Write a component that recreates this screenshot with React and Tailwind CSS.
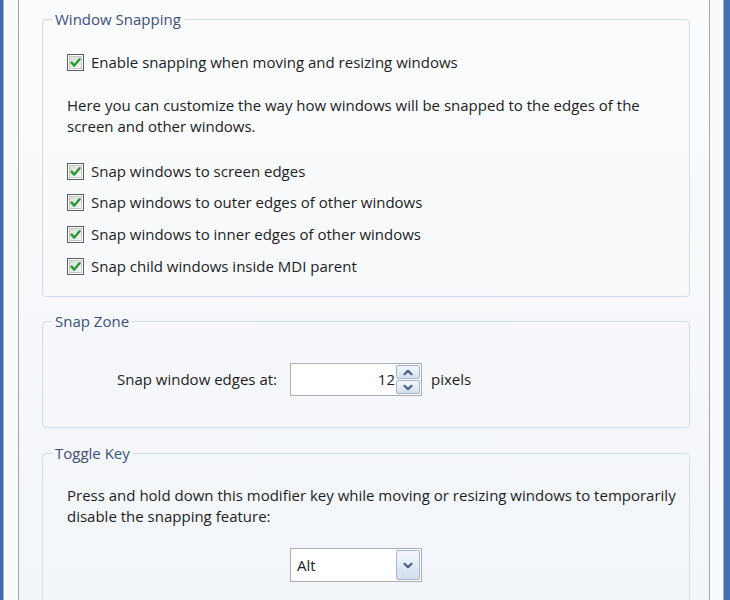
import React from "react";

const CheckBox = () => (
  <svg width="17" height="17" viewBox="0 0 17 17" className="shrink-0">
    <defs>
      <linearGradient id="cbfill" x1="0" y1="0" x2="1" y2="1">
        <stop offset="0" stopColor="#d6dbd7" />
        <stop offset="1" stopColor="#fbfcfb" />
      </linearGradient>
    </defs>
    <rect x="0.5" y="0.5" width="16" height="16" fill="#fff" stroke="#56625a" />
    <rect x="2.5" y="2.5" width="12" height="12" fill="url(#cbfill)" stroke="#c4cac5" />
    <path d="M4.6 8.6 L7.3 11.6 L12.6 5.2" fill="none" stroke="#2c9b2f" strokeWidth="2.4" strokeLinecap="round" strokeLinejoin="round" />
  </svg>
);

const Chevron = ({ down }) => (
  <svg width="10" height="7" viewBox="0 0 10 7">
    <path
      d={down ? "M1.5 1.8 L5 5.2 L8.5 1.8" : "M1.5 5.2 L5 1.8 L8.5 5.2"}
      fill="none"
      stroke="#4b5f82"
      strokeWidth="2.2"
      strokeLinecap="round"
      strokeLinejoin="round"
    />
  </svg>
);

const Group = ({ title, className, children }) => (
  <fieldset className={`rounded-[4px] border border-[#d3dbe2] p-0 ${className}`}>
    <legend className="ml-[9px] px-[3px] leading-[20px] text-[#3b507c]">{title}</legend>
    {children}
  </fieldset>
);

const Option = ({ label }) => (
  <div className="flex h-[20px] items-center gap-[7px]">
    <CheckBox />
    <span>{label}</span>
  </div>
);

export default function App() {
  return (
    <div className="flex h-[600px] w-[730px] overflow-hidden bg-white font-['Open_Sans',sans-serif] text-[15px] text-[#1d1d1d]">
      {/* window frame left */}
      <div className="w-[3px] bg-[#3f69a8]"></div>
      <div className="w-[15px] border-l border-[#9db7dc] bg-[#f8fafc]"></div>

      {/* tab page */}
      <div className="flex-1 border-x border-[#a3a7ad] bg-gradient-to-b from-[#fbfcfd] to-[#f2f5f9] pt-[9px] pl-[23px] pr-[19px]">
        <Group title="Window Snapping">
          <div className="px-[24px] pt-[23px] pb-[20px]">
            <Option label="Enable snapping when moving and resizing windows" />
            <p className="mt-[23px] leading-[21px]">
              Here you can customize the way how windows will be snapped to the edges of the
              <br />
              screen and other windows.
            </p>
            <div className="mt-[24px] flex flex-col gap-[11.7px]">
              <Option label="Snap windows to screen edges" />
              <Option label="Snap windows to outer edges of other windows" />
              <Option label="Snap windows to inner edges of other windows" />
              <Option label="Snap child windows inside MDI parent" />
            </div>
          </div>
        </Group>

        <Group title="Snap Zone" className="mt-[14px]">
          <div className="flex items-center pl-[74px] pt-[32px] pb-[31px]">
            <span className="w-[173px]">Snap window edges at:</span>
            <div className="flex h-[33px] w-[132px] items-center border border-[#abadb3] bg-white pr-[1px]">
              <span className="flex-1 pr-[1px] text-right">12</span>
              <div className="flex w-[24px] flex-col gap-[1px]">
                <div className="flex h-[14px] items-center justify-center rounded-[2px] border border-[#a7b6ca] bg-gradient-to-b from-[#f3f7fc] to-[#d5e0ee]">
                  <Chevron />
                </div>
                <div className="flex h-[14px] items-center justify-center rounded-[2px] border border-[#a7b6ca] bg-gradient-to-b from-[#f3f7fc] to-[#d5e0ee]">
                  <Chevron down />
                </div>
              </div>
            </div>
            <span className="ml-[9px]">pixels</span>
          </div>
        </Group>

        <Group title="Toggle Key" className="mt-[15px]">
          <div className="pl-[24px] pr-[8px] pt-[22px] pb-[30px]">
            <p className="whitespace-nowrap leading-[21px]">
              Press and hold down this modifier key while moving or resizing windows to temporarily
              <br />
              disable the snapping feature:
            </p>
            <div className="ml-[223px] mt-[21px] flex h-[34px] w-[132px] items-center border border-[#abadb3] bg-white pl-[6px] pr-[1px]">
              <span className="flex-1">Alt</span>
              <div className="flex h-[30px] w-[24px] items-center justify-center rounded-[2px] border border-[#a7b6ca] bg-gradient-to-b from-[#f3f7fc] to-[#d2deec]">
                <Chevron down />
              </div>
            </div>
          </div>
        </Group>
      </div>

      {/* window frame right */}
      <div className="w-[13px] bg-[#f8fafc]"></div>
      <div className="w-[7px] border-l border-[#9db7dc] bg-[#4470b0]"></div>
    </div>
  );
}
